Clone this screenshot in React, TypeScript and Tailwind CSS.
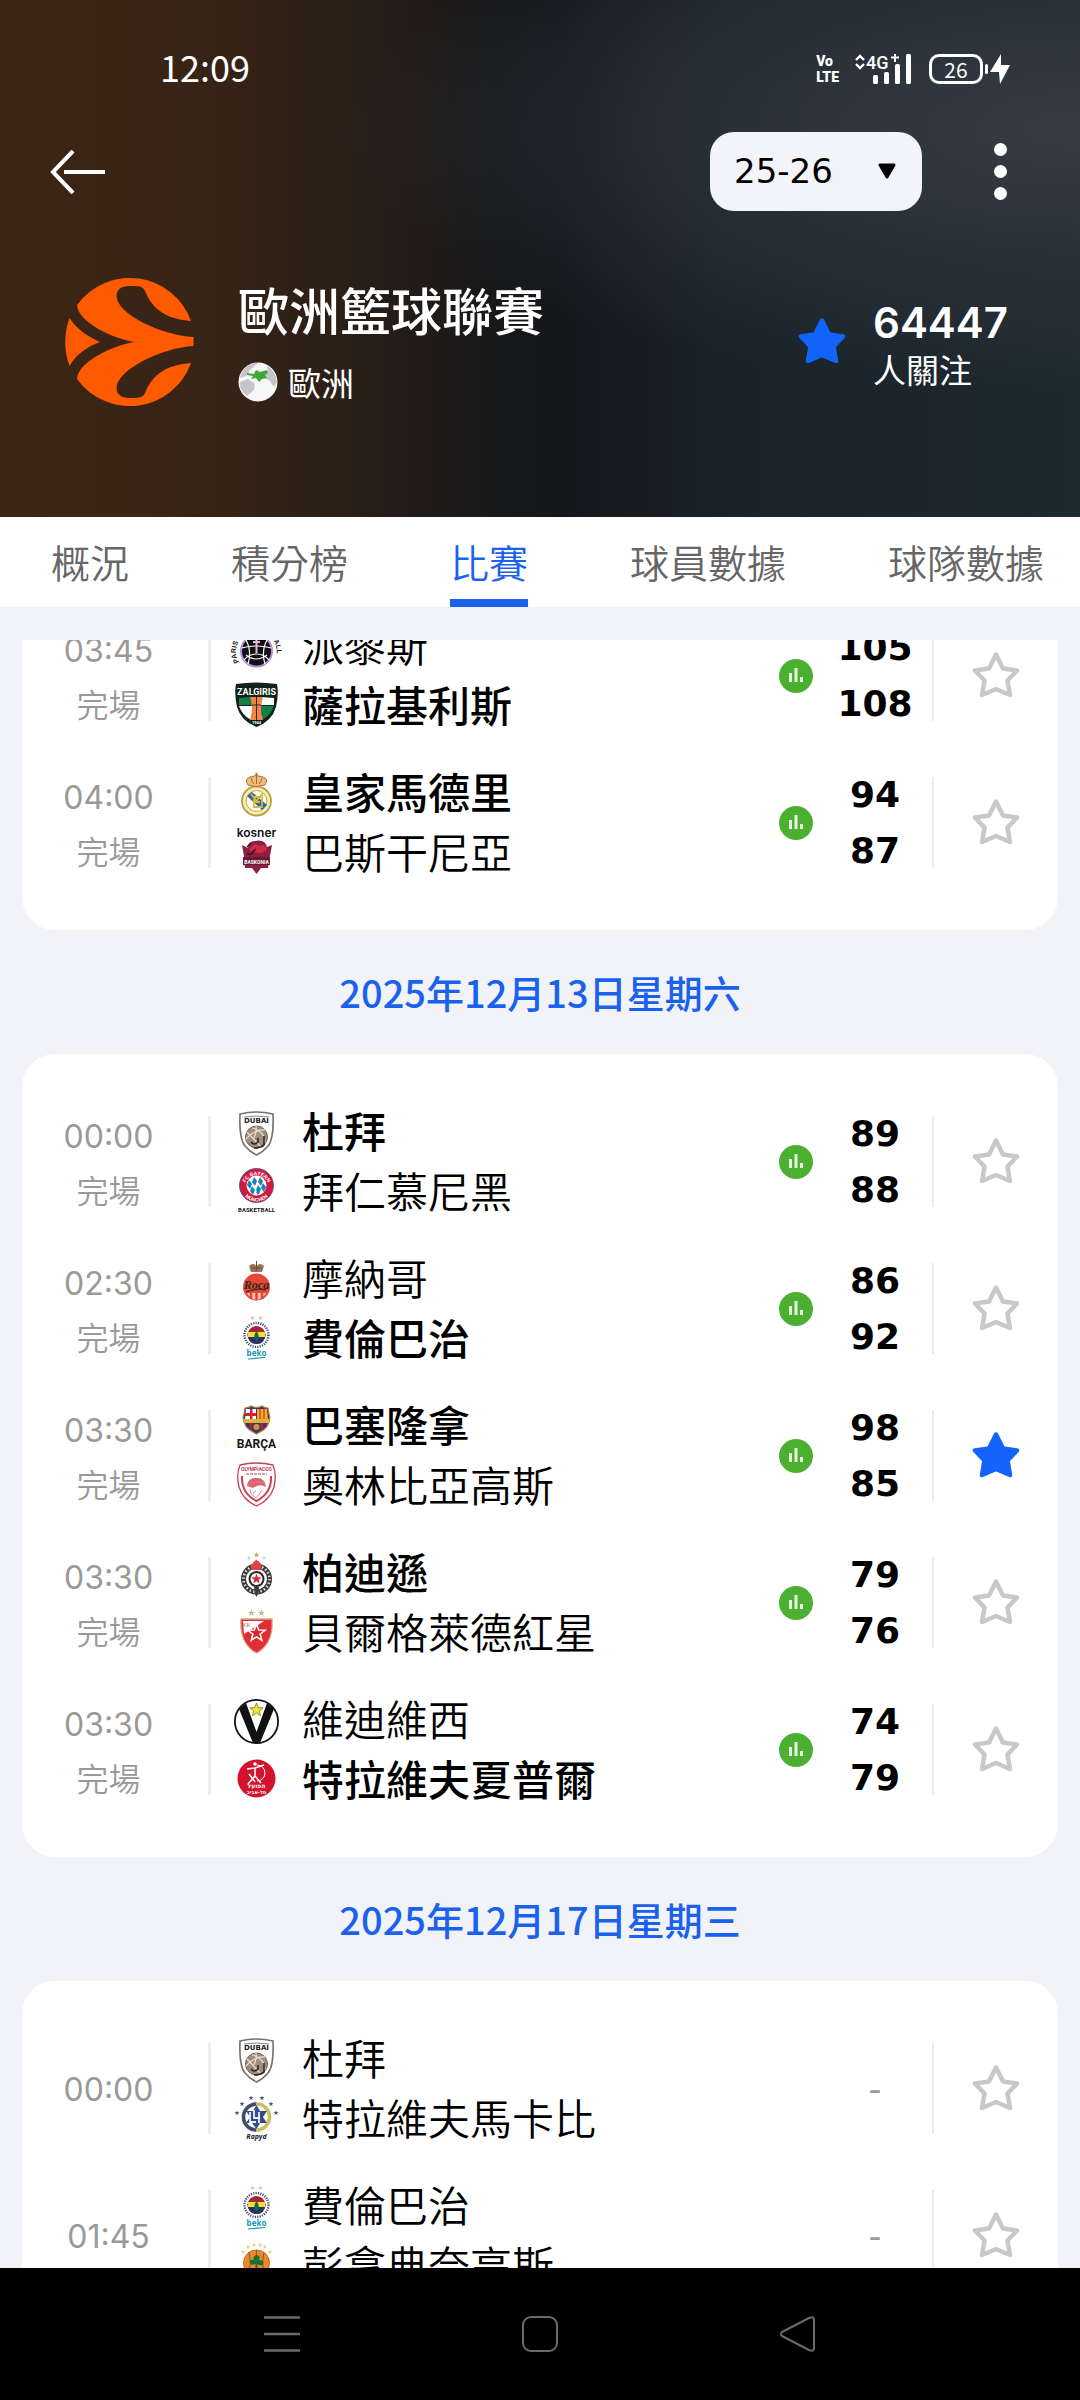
import { useState } from "react"
import type { ReactNode } from "react"

const cjk = "font-['Noto_Sans_CJK_TC',sans-serif]"
const latin = "font-['Inter','Noto_Sans_CJK_TC',sans-serif]"
const digits = "font-['DejaVu_Sans',sans-serif]"

function Crest({ name, children }: { name: string; children: ReactNode }) {
  return (
    <svg viewBox="0 0 45 45" className="size-[45px] overflow-visible" role="img" aria-label={name}>
      {children}
    </svg>
  )
}

const starPoints = (cx: number, cy: number, r: number) =>
  Array.from({ length: 10 }, (_, i) => {
    const a = (Math.PI / 5) * i - Math.PI / 2
    const d = i % 2 ? r * 0.42 : r
    return `${(cx + d * Math.cos(a)).toFixed(2)},${(cy + d * Math.sin(a)).toFixed(2)}`
  }).join(" ")

const crests: Record<string, ReactNode> = {
  paris: (
    <>
      <circle cx="22.5" cy="26" r="15.5" fill="#111" stroke="#b48ad6" strokeWidth="2" />
      <path d="M7.5 23Q22.5 19 37.5 23M10 35Q15 29 22.5 29T35 35M12 15Q18 26 14 39M33 15Q27 26 31 39M12 30Q22 38 33 30" fill="none" stroke="#fff" strokeWidth="1.2" />
      <path d="M22.5 10v18M19 17h7" stroke="#e6b9ea" strokeWidth="2" />
      <path id="paris-left" d="M5 37A19 19 0 0 1 10 11" fill="none" />
      <path id="paris-right" d="M36 12A19 19 0 0 1 39 38" fill="none" />
      <text className="font-['Liberation_Sans',sans-serif] text-[7px] font-bold" fill="#111"><textPath href="#paris-left">PARIS</textPath></text>
      <text className="font-['Liberation_Sans',sans-serif] text-[7px] font-bold" fill="#111"><textPath href="#paris-right">BALL</textPath></text>
    </>
  ),
  zalgiris: (
    <>
      <path d="M2 2Q22 -1 43 2Q45 12 42 25Q38 39 22.5 45Q7 39 3 25Q0 12 2 2Z" fill="#0f231b" />
      <path d="M5 16L18 15L19 23H5Z" fill="#128044" />
      <path d="M27 15L40 16V23H26Z" fill="#fff" />
      <path d="M5 24H19L17 38Q8 33 5 24Z" fill="#fff" />
      <path d="M26 24H40Q37 33 28 38Z" fill="#128044" />
      <path d="M16 15H29Q25 27 29 38H16Q20 27 16 15Z" fill="#ef8446" />
      <path d="M22.5 15V38M18 23H27" stroke="#40241a" strokeWidth="1" />
      <text x="22.5" y="12.5" textAnchor="middle" className="font-['Roboto',sans-serif] text-[9px] font-bold" fill="#fff">ZALGIRIS</text>
      <text x="22.5" y="42" textAnchor="middle" className="font-['Roboto',sans-serif] text-[4px] font-bold" fill="#fff">1944</text>
    </>
  ),
  real: (
    <>
      <circle cx="22.5" cy="29" r="14.5" fill="#f4ecc0" stroke="#b9a23f" strokeWidth="1.8" />
      <circle cx="22.5" cy="29" r="10.5" fill="#fffce8" stroke="#c4aa42" />
      <path d="M13 24L18 20L33 33L28 38Z" fill="#2c67a6" />
      <path d="M17 22L22.5 29L28 22V36M27 25H20V35H27M20 30H26" fill="none" stroke="#d9b93b" strokeWidth="1.8" />
      <path d="M14 13Q10 7 16 5Q22 2 29 5Q35 7 31 13Q22 16 14 13Z" fill="#eebb79" stroke="#b0713e" />
      <path d="M22.5 1V12M17 6Q18 10 20 12M28 6Q27 10 25 12" fill="none" stroke="#a5643b" />
      <circle cx="22.5" cy="2" r="1.3" fill="#b38132" />
    </>
  ),
  baskonia: (
    <>
      <text x="22.5" y="8" textAnchor="middle" className="font-['Inter',sans-serif] text-[12px] font-semibold" fill="#15151a">kosner</text>
      <path d="M8 16L14 19Q14 12 21 12Q31 10 33 18L38 16L36 27L34 39L27 39L22.5 45L18 39L11 39L10 27Z" fill="#8c2040" />
      <path d="M15 21Q20 12 25 17Q31 14 33 20Q29 26 20 23Z" fill="#d12b48" />
      <path d="M13 18L17 14M18 23L22 20M13 25Q18 26 20 22" fill="none" stroke="#401027" strokeWidth="1.5" />
      <path d="M9 28H36V36H9Z" fill="#6b1834" />
      <text x="22.5" y="34.5" textAnchor="middle" className="font-['Roboto',sans-serif] text-[5px] font-bold" fill="#fff">BASKONIA</text>
    </>
  ),
  dubai: (
    <>
      <path d="M6 3Q22.5 -1 39 3Q40 28 34 35Q29 41 22.5 44Q16 41 11 35Q5 28 6 3Z" fill="#fff" stroke="#77716b" strokeWidth="1.6" />
      <path d="M10 6Q22.5 4 35 6" fill="none" stroke="#8d8070" />
      <text x="22.5" y="12" textAnchor="middle" className="font-['DejaVu_Sans',sans-serif] text-[7px] font-bold" fill="#222">DUBAI</text>
      <circle cx="22.5" cy="26" r="11" fill="#a18e7a" stroke="#6d6258" />
      <path d="M13 21L27 36M18 17Q31 20 31 32M12 28Q21 18 31 19M22 15Q23 21 20 27" fill="none" stroke="#e7dfd4" strokeWidth="1.2" />
      <path d="M17 31Q20 35 24 31V27M30 25V34Q26 37 20 37" fill="none" stroke="#2a2928" strokeWidth="1.6" />
    </>
  ),
  bayern: (
    <>
      <circle cx="22.5" cy="17.5" r="17" fill="#d3173f" stroke="#34568e" strokeWidth="0.8" />
      <circle cx="22.5" cy="17.5" r="10" fill="#fff" />
      <path d="M15 12l3 4-2 5-3-4zM20 9l3 4-2 5-3-4zM26 9l3 4-2 5-3-4zM18 18l3 4-2 5-3-4zM24 17l3 4-2 5-3-4zM29 15l3 4-2 5-3-4zM24 22l2 2-2 3-2-3z" fill="#1f7fb9" />
      <path id="bayern-top" d="M10.500 19A12 12 0 0 1 34.500 19" fill="none" />
      <path id="bayern-bottom" d="M7 18A15.500 15.500 0 0 0 38 18" fill="none" />
      <text className="font-['Liberation_Sans',sans-serif] text-[5px] font-bold" fill="#fff"><textPath href="#bayern-top" startOffset="50%" textAnchor="middle">FC BAYERN</textPath></text>
      <text className="font-['Liberation_Sans',sans-serif] text-[5px] font-bold" fill="#fff"><textPath href="#bayern-bottom" startOffset="50%" textAnchor="middle">MÜNCHEN</textPath></text>
      <text x="22.5" y="44" textAnchor="middle" className="font-['Roboto',sans-serif] text-[6px] font-bold" fill="#222">BASKETBALL</text>
    </>
  ),
  monaco: (
    <>
      <circle cx="22.5" cy="29" r="13.5" fill="#e74939" />
      <path d="M13 35H32Q28 42 22.5 42Q16 41 13 35Z" fill="#f7c7bb" />
      <path d="M17 34V41M22.5 34V42M28 34V41" stroke="#e54235" strokeWidth="2.5" />
      <text x="22.5" y="31" textAnchor="middle" className="font-['Liberation_Serif',serif] text-[12px] font-bold italic" fill="#352620">Roca</text>
      <path d="M12 34Q22 30 32 32" fill="none" stroke="#4a302a" strokeWidth="1.5" />
      <path d="M17 14L15 8Q19 4 22.5 8Q26 4 30 8L28 14Z" fill="#9b7157" />
      <path d="M22.5 3V13M17 10H28" stroke="#614b42" />
    </>
  ),
  fener: (
    <>
      <polygon points={starPoints(18.5, 3, 2.5)} fill="#e4bd83" />
      <polygon points={starPoints(26.5, 3, 2.5)} fill="#e4bd83" />
      <circle cx="22.5" cy="20" r="12" fill="#fff" stroke="#485075" strokeWidth="2.4" strokeDasharray="1.2 1.2" />
      <circle cx="22.5" cy="20" r="9" fill="#a92435" />
      <path d="M13.5 19H31.5Q31 29 22.5 29Q14 29 13.5 19Z" fill="#243665" />
      <path d="M14 17H31V22H14Z" fill="#f3df32" />
      <path d="M22.5 16Q27 22 22.5 26Q18 22 22.5 16Z" fill="#1b6744" />
      <text x="22.5" y="40.500" textAnchor="middle" className="font-['Noto_Sans',sans-serif] text-[8px] font-bold" fill="#1897b5">beko</text>
      <path d="M14 44L31 42.500" stroke="#1897b5" strokeWidth="1.2" />
    </>
  ),
  barca: (
    <>
      <path d="M11 3Q15 3 17 1Q22.5 4 28 1Q30 3 34 3L35 9Q37 13 34 19Q34 23 22.5 29Q11 23 11 19Q8 13 10 9Z" fill="#453171" stroke="#a18434" strokeWidth="1.2" />
      <path d="M12 4H22V15H11Z" fill="#fff" />
      <path d="M16 4H18.5V15H16ZM11 8H22V11H11Z" fill="#d22338" />
      <path d="M23 4H33L34 15H23Z" fill="#f3ae26" />
      <path d="M26 4V15M30 4V15" stroke="#d14a27" strokeWidth="1.5" />
      <path d="M10 14H35V18H10Z" fill="#dcb239" />
      <path d="M17 18V25M28 18V25" stroke="#9c2445" strokeWidth="3" />
      <circle cx="22.5" cy="22" r="3" fill="#c49a38" />
      <text x="22.5" y="43" textAnchor="middle" className="font-['Roboto',sans-serif] text-[12px] font-bold" fill="#16171b">BARÇA</text>
    </>
  ),
  olympiacos: (
    <>
      <path d="M6 3Q22.5 -1 39 3Q43 12 40 25Q36 38 22.5 44Q9 38 5 25Q2 12 6 3Z" fill="#fff" stroke="#c83e51" strokeWidth="1.3" />
      <path d="M8 14Q7 31 22.5 39Q38 31 37 14" fill="none" stroke="#ce4055" strokeWidth="2" />
      <text x="22.5" y="9" textAnchor="middle" className="font-['Roboto',sans-serif] text-[5px] font-bold" fill="#bd4053">OLYMPIACOS</text>
      <path d="M12 12H33" stroke="#d97b86" strokeWidth="1.5" strokeDasharray="3 1" />
      <path d="M13 24Q14 15 23 16Q31 16 32 25Q26 21 19 26Z" fill="#df6170" />
      <path d="M14 23Q21 18 31 21M16 27L17 32L22 36L26 31L28 28M22 29L19 31" fill="none" stroke="#d38892" />
    </>
  ),
  partizan: (
    <>
      <polygon points={starPoints(22.5, 3, 3)} fill="#c3ad54" />
      <polygon points={starPoints(15, 6, 2.4)} fill="#bfd2df" />
      <polygon points={starPoints(30, 6, 2.4)} fill="#bfd2df" />
      <circle cx="22.5" cy="27" r="13" fill="#fff" stroke="#39393b" strokeWidth="5" />
      <circle cx="22.5" cy="27" r="13" fill="none" stroke="#dfdfdf" strokeWidth="2.6" strokeDasharray="1.5 2.2" />
      <circle cx="22.5" cy="27" r="8" fill="#29292d" />
      <circle cx="22.5" cy="27" r="6" fill="#fff" />
      <polygon points={starPoints(22.5, 27, 5.5)} fill="#d92543" />
      <path d="M17 18Q17 10 22.5 8Q28 10 28 18Z" fill="#db4249" />
      <path d="M20 35H25L24 42L22.5 45L21 42Z" fill="#3b3b40" />
    </>
  ),
  redstar: (
    <>
      <polygon points={starPoints(17.5, 4, 3.6)} fill="#c9b991" />
      <polygon points={starPoints(27.5, 4, 3.6)} fill="#c9b991" />
      <path d="M7 10H38Q39 24 34 33Q29 41 22.5 44Q16 41 11 33Q6 24 7 10Z" fill="#e32d35" stroke="#d7ab88" strokeWidth="1.3" />
      <path d="M9 12H30L10 25Z" fill="#fff" />
      <text x="9" y="18" className="font-['Roboto',sans-serif] text-[6px]" fill="#c76160">KK</text>
      <polygon points={starPoints(22.5, 24, 9)} fill="#df262f" stroke="#fff" strokeWidth="1.5" />
    </>
  ),
  virtus: (
    <>
      <circle cx="22.5" cy="22.5" r="21.6" fill="#fff" stroke="#141414" strokeWidth="1.8" />
      <path d="M5 10L12 4L22.5 33L33 4L40 10L26 44H19Z" fill="#111" />
      <polygon points={starPoints(22.5, 11, 7)} fill="#f4e62b" stroke="#817b24" strokeWidth="0.8" />
    </>
  ),
  hapoel: (
    <>
      <circle cx="22.5" cy="22.5" r="19" fill="#d5122d" />
      <path d="M23 9A8 8 0 1 1 23 25" fill="none" stroke="#fff" />
      <circle cx="21" cy="8" r="1.8" fill="#fff" />
      <path d="M13 13L21 12L30 9M21 12V20L27 27M21 20L14 28M15 18L21 26" fill="none" stroke="#fff" strokeWidth="1.5" />
      <text x="22.5" y="32" textAnchor="middle" className="font-['DejaVu_Sans',sans-serif] text-[6px] font-bold" fill="#fff">הפועל</text>
      <text x="22.5" y="37.500" textAnchor="middle" className="font-['DejaVu_Sans',sans-serif] text-[5px] font-bold" fill="#fff">תל-אביב</text>
    </>
  ),
  maccabi: (
    <>
      {[[3, 18], [8, 9], [17, 3], [28, 3], [37, 9], [42, 18]].map(([x, y]) => (
        <polygon key={x} points={starPoints(x, y, 2.6)} fill="#45577b" />
      ))}
      <path d="M22.5 9A13 13 0 0 0 22.5 35" fill="#fff" stroke="#3e4d68" strokeWidth="3.6" />
      <path d="M22.5 9A13 13 0 0 1 22.5 35" fill="#fff" stroke="#cdbd5c" strokeWidth="3.6" />
      <path d="M22.5 10L26 16H33L29 22L33 28H26L22.5 34L18 28H12L16 22L12 16H19Z" fill="#344c8a" />
      <path d="M16 17V27H22M20 15V23H26M25 17V28" fill="none" stroke="#eef1fa" strokeWidth="1.8" />
      <text x="22.5" y="44" textAnchor="middle" className="font-['Noto_Sans',sans-serif] text-[7px] font-bold italic" fill="#20252e">Rapyd</text>
    </>
  ),
  pao: (
    <>
      {[[9, 10], [14, 5], [20, 3], [26, 3], [31, 5], [36, 10]].map(([x, y]) => (
        <polygon key={x} points={starPoints(x, y, 2.4)} fill="#edce6e" />
      ))}
      <circle cx="22.5" cy="21" r="13" fill="#e78c28" stroke="#bd6b24" />
      <path d="M15 10Q18 21 15 32M30 10Q27 21 30 32M22.5 8V14" fill="none" stroke="#935424" />
      <path d="M22.5 13Q27 14 25 18Q31 18 29 23Q25 24 23.5 22V30H21.5V22Q17 24 15.5 21Q15 17 20 18Q18 14 22.5 13Z" fill="#16703a" />
    </>
  ),
}

type Team = { crest: string; name: string; score?: number }
type Match = { id: string; time: string; home: Team; away: Team }
type Day = { date?: string; matches: Match[] }

const days: Day[] = [
  {
    matches: [
      { id: "m1", time: "03:45", home: { crest: "paris", name: "派黎斯", score: 105 }, away: { crest: "zalgiris", name: "薩拉基利斯", score: 108 } },
      { id: "m2", time: "04:00", home: { crest: "real", name: "皇家馬德里", score: 94 }, away: { crest: "baskonia", name: "巴斯干尼亞", score: 87 } },
    ],
  },
  {
    date: "2025年12月13日星期六",
    matches: [
      { id: "m3", time: "00:00", home: { crest: "dubai", name: "杜拜", score: 89 }, away: { crest: "bayern", name: "拜仁慕尼黑", score: 88 } },
      { id: "m4", time: "02:30", home: { crest: "monaco", name: "摩納哥", score: 86 }, away: { crest: "fener", name: "費倫巴治", score: 92 } },
      { id: "m5", time: "03:30", home: { crest: "barca", name: "巴塞隆拿", score: 98 }, away: { crest: "olympiacos", name: "奧林比亞高斯", score: 85 } },
      { id: "m6", time: "03:30", home: { crest: "partizan", name: "柏迪遜", score: 79 }, away: { crest: "redstar", name: "貝爾格萊德紅星", score: 76 } },
      { id: "m7", time: "03:30", home: { crest: "virtus", name: "維迪維西", score: 74 }, away: { crest: "hapoel", name: "特拉維夫夏普爾", score: 79 } },
    ],
  },
  {
    date: "2025年12月17日星期三",
    matches: [
      { id: "m8", time: "00:00", home: { crest: "dubai", name: "杜拜" }, away: { crest: "maccabi", name: "特拉維夫馬卡比" } },
      { id: "m9", time: "01:45", home: { crest: "fener", name: "費倫巴治" }, away: { crest: "pao", name: "彭拿典奈高斯" } },
    ],
  },
]

const tabs = ["概況", "積分榜", "比賽", "球員數據", "球隊數據"]

function Star({ filled }: { filled?: boolean }) {
  return (
    <svg
      viewBox="0 0 48 48"
      className={filled ? "size-12 fill-[#1264fb] stroke-[#1264fb]" : "size-12 fill-none stroke-[#c8c8c8]"}
      strokeWidth="4.5"
      strokeLinejoin="round"
      aria-hidden="true"
    >
      <path d="M24 2.500L31 16.500L45 18.500L35.500 28.500L38 43L24 37L10 43L12.500 28.500L3 18.500L17 16.500Z" />
    </svg>
  )
}

function StatusBar() {
  return (
    <div className="flex h-[132px] items-center justify-between pt-1.5 pr-[70px] pl-[160px]">
      <span className={`${cjk} pb-1.5 text-4xl`}>12:09</span>
      <div className="flex items-center">
        <span className="mr-4 flex flex-col font-['Roboto',sans-serif] text-[14px] leading-4 font-black">
          <span>Vo</span>
          <span>LTE</span>
        </span>
        <svg viewBox="0 0 56 30" className="mr-[18px] h-[30px] w-14 overflow-visible" fill="currentColor" aria-hidden="true">
          <path d="M1 6L5 2L9 6M1 10L5 14L9 10" fill="none" stroke="currentColor" strokeWidth="2.4" />
          <text x="11" y="15" className="font-['Roboto',sans-serif] text-[18px] font-medium">4G</text>
          <path d="M36 3.5H44M40 0V8" stroke="currentColor" strokeWidth="2" />
          <rect x="18" y="21" width="5" height="9" rx="1.5" />
          <rect x="29" y="18" width="5" height="12" rx="1.5" />
          <rect x="40" y="10" width="5" height="20" rx="1.5" />
          <rect x="51" y="0" width="5" height="30" rx="1.5" />
        </svg>
        <span className={`${cjk} flex h-[30px] w-[54px] items-center justify-center rounded-[10px] border-[3px] border-white text-[21px] leading-6`}>26</span>
        <span className="mx-0.5 h-2.5 w-[3px] rounded-sm bg-white" />
        <svg viewBox="0 0 20 30" className="h-[30px] w-5" fill="currentColor" aria-hidden="true">
          <path d="M11 0L0 18H9L10 30L20 11H11Z" />
        </svg>
      </div>
    </div>
  )
}

function Header() {
  return (
    <header className="bg-[radial-gradient(ellipse_at_100%_25%,#363c44_0%,#2d343bcc_22%,transparent_48%),linear-gradient(90deg,#3c2515_0%,#382415_18%,#2b1f17_32%,#17181a_46%,#14171a_52%,#19222a_66%,#1d2930_100%)] pb-[110px] text-white">
      <StatusBar />
      <div className="flex items-center pr-[73px] pl-[50px]">
        <button aria-label="返回">
          <svg viewBox="0 0 56 44" className="h-11 w-14" fill="none" stroke="currentColor" strokeWidth="4" aria-hidden="true">
            <path d="M23 1L3 22L23 43M14 22H55" />
          </svg>
        </button>
        <div className="relative ml-auto text-black">
          <select
            aria-label="賽季"
            defaultValue="25-26"
            className={`${digits} h-[79px] w-[212px] appearance-none rounded-3xl bg-[#f3f4f9] px-6 text-[34px]`}
          >
            <option>25-26</option>
            <option>24-25</option>
          </select>
          <svg viewBox="0 0 18 16" className="pointer-events-none absolute top-[31px] right-[26px] h-4 w-[18px]" aria-hidden="true">
            <path d="M2 2H16L9 14Z" stroke="currentColor" strokeWidth="3" strokeLinejoin="round" />
          </svg>
        </div>
        <button aria-label="更多" className="ml-[72px] flex flex-col gap-[9px]">
          <span className="size-[13px] rounded-full bg-white" />
          <span className="size-[13px] rounded-full bg-white" />
          <span className="size-[13px] rounded-full bg-white" />
        </button>
      </div>

      <div className="mt-[66px] flex items-center pr-[72px] pl-[65px]">
        <svg viewBox="0 0 130 130" className="size-[130px]" fill="#ff5a00" role="img" aria-label="歐洲籃球聯賽">
          <path d="M4.5 41C12 53 24 60 35 65C24 69 12 76 4.5 89Q-4 65 4.5 41Z" />
          <path d="M128.5 60C95 58 50 36 51.6 18C52 10 60 9 66 9C76 9 78 10 80 14C88 34 103 42 126 44A65 65 0 0 0 12 28C13 46 50 62 69 65C50 68 13 84 12 102A65 65 0 0 0 126 86C103 88 88 96 80 116C78 120 76 121 66 121C60 121 52 120 51.6 112C50 94 95 71 128.5 69Z" />
        </svg>
        <div className={`${cjk} ml-[43px]`}>
          <h1 className="text-[51px] leading-[60px] font-medium">歐洲籃球聯賽</h1>
          <p className="mt-5 flex items-center gap-2.5 text-[33px] leading-[46px]">
            <svg viewBox="0 0 40 40" className="size-10" aria-hidden="true">
              <circle cx="20" cy="20" r="19.5" fill="#f7f7f8" />
              <path d="M7 6Q13 0 20 1L13 7L8 14L2 16Q3 10 7 6ZM2 20L10 17L17 22L16 28L9 34Q1 28 2 20ZM29 3Q38 10 39 20L36 25L32 19L25 15L30 10Z" fill="#c6c6ca" />
              <path d="M9 11L16 12L18 8L22 10L29 8L30 11L27 13L29 16L24 17L21 20L18 16L13 17L15 14L9 13Z" fill="#42a73a" />
            </svg>
            歐洲
          </p>
        </div>
        <button className="ml-auto flex items-center gap-[27px] text-left" aria-pressed="true">
          <Star filled />
          <span className="flex flex-col pt-2">
            <span className={`${latin} text-[42px] leading-[46px] font-semibold`}>64447</span>
            <span className={`${cjk} text-[33px] leading-[46px]`}>人關注</span>
          </span>
        </button>
      </div>
    </header>
  )
}

function StatsBadge() {
  return (
    <svg viewBox="0 0 34 34" className="size-[34px]" role="img" aria-label="統計">
      <circle cx="17" cy="17" r="17" fill="#4bb030" />
      <path d="M11.5 14V23M17 9V23M22.5 18V23" stroke="#e8f8e2" strokeWidth="3" />
    </svg>
  )
}

function MatchRow({ match, starred, onToggle }: { match: Match; starred: boolean; onToggle: () => void }) {
  const { home, away } = match
  const played = home.score !== undefined && away.score !== undefined
  const homeWon = played && home.score! > away.score!
  const awayWon = played && away.score! > home.score!

  return (
    <li className="flex h-[147px] items-center">
      <div className="mr-[13px] flex w-[173px] flex-col items-center pt-0.5 text-[32px] leading-[53px] text-[#999]">
        <time className={latin}>{match.time}</time>
        {played && <span className={`${cjk} font-[350]`}>完場</span>}
      </div>
      <div className="h-[91px] w-[3px] bg-[#eeeeef]" />
      <div className="ml-[23px] flex flex-col gap-3">
        <Crest name={home.name}>{crests[home.crest]}</Crest>
        <Crest name={away.name}>{crests[away.crest]}</Crest>
      </div>
      <div className={`${cjk} ml-[23px] flex-1 pb-1 text-[42px] leading-[60px] text-black`}>
        <p className={homeWon ? "font-medium" : "font-[350]"}>{home.name}</p>
        <p className={awayWon ? "font-medium" : "font-[350]"}>{away.name}</p>
      </div>
      {played && <StatsBadge />}
      <div className={`${digits} ml-[5px] w-[114px] text-center text-4xl leading-[56px] font-bold text-black`}>
        {played ? (
          <>
            <p>{home.score}</p>
            <p>{away.score}</p>
          </>
        ) : (
          <p className="font-normal text-[#999]">-</p>
        )}
      </div>
      <div className="h-[91px] w-0.5 bg-[#ebebed]" />
      <button className="flex w-[124px] justify-center" aria-label="關注賽事" aria-pressed={starred} onClick={onToggle}>
        <Star filled={starred} />
      </button>
    </li>
  )
}

export default function App() {
  const [activeTab, setActiveTab] = useState("比賽")
  const [starred, setStarred] = useState<string[]>(["m5"])

  const toggle = (id: string) =>
    setStarred((ids) => (ids.includes(id) ? ids.filter((i) => i !== id) : [...ids, id]))

  return (
    <div className="flex h-screen flex-col bg-[#f2f3f8]">
      <Header />

      <nav className={`${cjk} flex shrink-0 gap-[102px] overflow-hidden bg-white pl-[51px] text-[39px] font-[350] whitespace-nowrap`}>
        {tabs.map((tab) => (
          <button
            key={tab}
            onClick={() => setActiveTab(tab)}
            className={
              tab === activeTab
                ? "h-[90px] shrink-0 border-b-8 border-[#1a62ee] pt-1.5 text-[#1a62ee]"
                : "h-[90px] shrink-0 border-b-8 border-transparent pt-1.5 text-[#666]"
            }
          >
            {tab}
          </button>
        ))}
      </nav>

      {/* Match list, scrolled part of the way into the first day */}
      <main className="mt-[33px] min-h-0 flex-1 overflow-hidden px-[22px]">
        <div className="-mt-[72px]">
          {days.map((day) => (
            <section key={day.matches[0].id}>
              {day.date && (
                <h2 className={`${cjk} text-center text-[38px] leading-[124px] font-medium text-[#1a62ee]`}>{day.date}</h2>
              )}
              <ul className="rounded-[33px] bg-white py-[34px]">
                {day.matches.map((match) => (
                  <MatchRow
                    key={match.id}
                    match={match}
                    starred={starred.includes(match.id)}
                    onToggle={() => toggle(match.id)}
                  />
                ))}
              </ul>
            </section>
          ))}
        </div>
      </main>

      <footer className="flex h-[132px] shrink-0 items-center justify-center gap-[222px] bg-black text-[#6a6a6a]">
        <button aria-label="最近">
          <svg viewBox="0 0 36 36" className="size-9" fill="none" stroke="currentColor" strokeWidth="2.5">
            <path d="M0 1.5H36M0 18H36M0 34.5H36" />
          </svg>
        </button>
        <button aria-label="主頁">
          <svg viewBox="0 0 36 36" className="size-9" fill="none" stroke="currentColor" strokeWidth="2">
            <rect x="1" y="1" width="34" height="34" rx="8" />
          </svg>
        </button>
        <button aria-label="後退">
          <svg viewBox="0 0 36 36" className="size-9" fill="none" stroke="currentColor" strokeWidth="2" strokeLinejoin="round">
            <path d="M2 16Q0 18 2 20L29 34Q34 36 34 32V4Q34 0 29 2Z" />
          </svg>
        </button>
      </footer>
    </div>
  )
}
